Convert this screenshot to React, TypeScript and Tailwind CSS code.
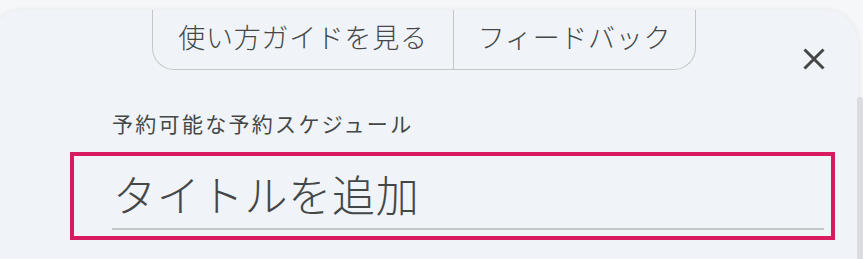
import React from 'react';

const font = { fontFamily: '"Noto Sans CJK JP", "Noto Sans", sans-serif' };

const CloseIcon: React.FC = () => (
  <svg width="22" height="22" viewBox="0 0 22 22" fill="none">
    <path d="M1.5 1.5 L20.5 20.5 M20.5 1.5 L1.5 20.5" stroke="#444746" strokeWidth="3" />
  </svg>
);

const App: React.FC = () => {
  return (
    <div className="relative w-[863px] h-[259px] overflow-hidden bg-[#f6f7f9] pt-[10px]" style={font}>
      <div className="ml-[-11px] w-[869px] h-[249px] rounded-t-[34px] bg-[#f0f4f9] shadow-[0_0_6px_rgba(0,0,0,0.08)]">
        {/* header: help tabs + close */}
        <div className="flex h-[60px] items-start">
          <div className="ml-[163px] flex h-[60px] rounded-b-[22px] border border-t-0 border-[#c4c7c5] text-[27px] font-light text-[#444746]">
            <button className="flex w-[300px] items-center justify-center pb-[5px] tracking-[0.7px]">
              使い方ガイドを見る
            </button>
            <div className="w-px bg-[#c4c7c5]" />
            <button className="flex w-[241px] items-center justify-center pb-[5px] tracking-[0.7px]">
              フィードバック
            </button>
          </div>
          <div className="flex-1" />
          <button className="mr-[33px] mt-[38px] h-[22px] w-[22px]">
            <CloseIcon />
          </button>
        </div>

        {/* form */}
        <div className="mt-[38px] ml-[123px] text-[21px] leading-[30px] tracking-[2.3px] text-[#444746]">
          予約可能な予約スケジュール
        </div>
        <div className="ml-[81px] mt-[14px] h-[88px] w-[765px] border-4 border-[#d81b60] pl-[38px] pr-[7px] pt-[8px]">
          <div className="h-[66px] border-b-2 border-[#c4c7c5] pl-[1px] text-[43px] font-light leading-[58px] tracking-[0.8px] text-[#444746]">
            タイトルを追加
          </div>
        </div>
      </div>
      <div className="absolute right-0 top-[97px] h-[170px] w-[6px] rounded-t-full bg-[#dadce0]" />
    </div>
  );
};

export default App;
